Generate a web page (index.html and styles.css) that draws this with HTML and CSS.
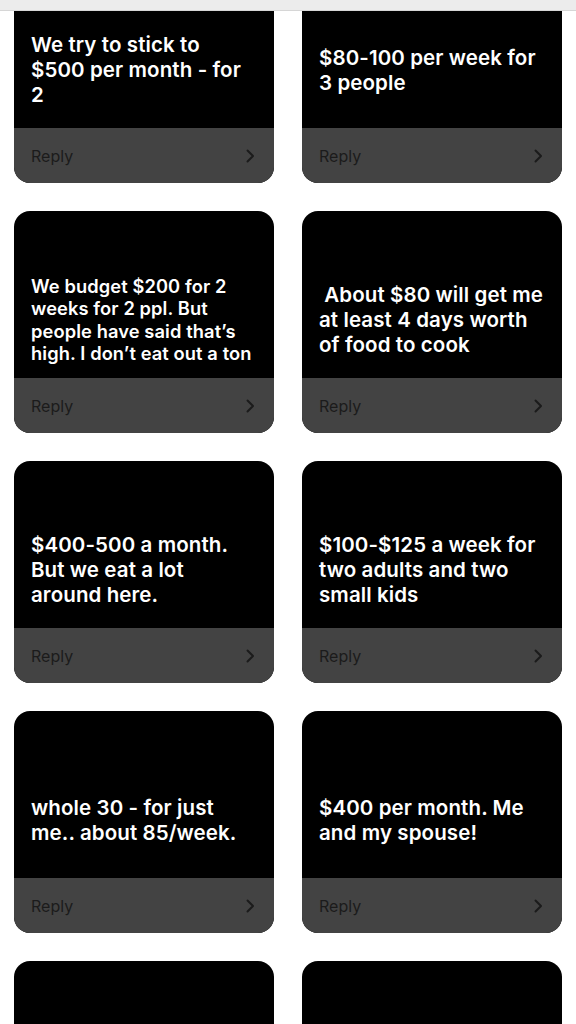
FILE: index.html
```html
<!DOCTYPE html>
<html lang="en">
<head>
  <meta charset="UTF-8">
  <meta name="viewport" content="width=device-width, initial-scale=1.0">
  <title>Replies</title>
  <link rel="stylesheet" href="styles.css">
</head>
<body>
  <div class="topbar"></div>
  <div class="grid">
    <div class="card">
      <div class="card-head"></div>
      <div class="card-body"><p>We try to stick to<br>$500 per month - for<br>2</p></div>
      <div class="card-reply"><span>Reply</span><svg class="chev" viewBox="0 0 10 16"><path d="M2.5 2.5l5.5 5.5-5.5 5.5"/></svg></div>
    </div>
    <div class="card">
      <div class="card-head"></div>
      <div class="card-body"><p>$80-100 per week for<br>3 people</p></div>
      <div class="card-reply"><span>Reply</span><svg class="chev" viewBox="0 0 10 16"><path d="M2.5 2.5l5.5 5.5-5.5 5.5"/></svg></div>
    </div>
    <div class="card">
      <div class="card-head"></div>
      <div class="card-body"><p class="small">We budget $200 for 2<br>weeks for 2 ppl. But<br>people have said that’s<br>high. I don’t eat out a ton</p></div>
      <div class="card-reply"><span>Reply</span><svg class="chev" viewBox="0 0 10 16"><path d="M2.5 2.5l5.5 5.5-5.5 5.5"/></svg></div>
    </div>
    <div class="card">
      <div class="card-head"></div>
      <div class="card-body"><p>&nbsp;About $80 will get me<br>at least 4 days worth<br>of food to cook</p></div>
      <div class="card-reply"><span>Reply</span><svg class="chev" viewBox="0 0 10 16"><path d="M2.5 2.5l5.5 5.5-5.5 5.5"/></svg></div>
    </div>
    <div class="card">
      <div class="card-head"></div>
      <div class="card-body"><p>$400-500 a month.<br>But we eat a lot<br>around here.</p></div>
      <div class="card-reply"><span>Reply</span><svg class="chev" viewBox="0 0 10 16"><path d="M2.5 2.5l5.5 5.5-5.5 5.5"/></svg></div>
    </div>
    <div class="card">
      <div class="card-head"></div>
      <div class="card-body"><p>$100-$125 a week for<br>two adults and two<br>small kids</p></div>
      <div class="card-reply"><span>Reply</span><svg class="chev" viewBox="0 0 10 16"><path d="M2.5 2.5l5.5 5.5-5.5 5.5"/></svg></div>
    </div>
    <div class="card">
      <div class="card-head"></div>
      <div class="card-body"><p>whole 30 - for just<br>me.. about 85/week.</p></div>
      <div class="card-reply"><span>Reply</span><svg class="chev" viewBox="0 0 10 16"><path d="M2.5 2.5l5.5 5.5-5.5 5.5"/></svg></div>
    </div>
    <div class="card">
      <div class="card-head"></div>
      <div class="card-body"><p>$400 per month. Me<br>and my spouse!</p></div>
      <div class="card-reply"><span>Reply</span><svg class="chev" viewBox="0 0 10 16"><path d="M2.5 2.5l5.5 5.5-5.5 5.5"/></svg></div>
    </div>
    <div class="card">
      <div class="card-head"></div>
      <div class="card-body"></div>
      <div class="card-reply"></div>
    </div>
    <div class="card">
      <div class="card-head"></div>
      <div class="card-body"></div>
      <div class="card-reply"></div>
    </div>
  </div>
</body>
</html>
```

FILE: styles.css
```css
body {
  margin: 0;
  background: #fff;
  font-family: Inter, "Noto Sans", sans-serif;
  overflow: hidden;
}
.topbar {
  position: fixed;
  top: 0;
  left: 0;
  right: 0;
  height: 10px;
  background: #ececec;
  border-bottom: 1px solid #d6d6d6;
  z-index: 2;
}
.grid {
  display: grid;
  grid-template-columns: 260px 260px;
  column-gap: 28px;
  row-gap: 28px;
  padding: 0 14px;
  margin-top: -39px;
}
.card {
  height: 222px;
  border-radius: 16px;
  overflow: hidden;
  background: #000;
  display: flex;
  flex-direction: column;
}
.card-head {
  height: 50px;
}
.card-body {
  height: 117px;
  display: flex;
  align-items: center;
  padding: 0 17px;
}
.card-body p {
  margin: 0;
  color: #fff;
  font-size: 20.5px;
  font-weight: 600;
  line-height: 25px;
  letter-spacing: 0.1px;
  white-space: nowrap;
}
.card-body p.small {
  font-size: 18.3px;
  line-height: 22.3px;
}
.card-reply {
  height: 55px;
  background: #434343;
  display: flex;
  align-items: center;
  justify-content: space-between;
  padding: 0 19px 0 17px;
  color: #1b1b1b;
  font-size: 16px;
}
.chev {
  width: 10px;
  height: 16px;
  fill: none;
  stroke: #1b1b1b;
  stroke-width: 2;
  stroke-linecap: round;
  stroke-linejoin: round;
}
```
